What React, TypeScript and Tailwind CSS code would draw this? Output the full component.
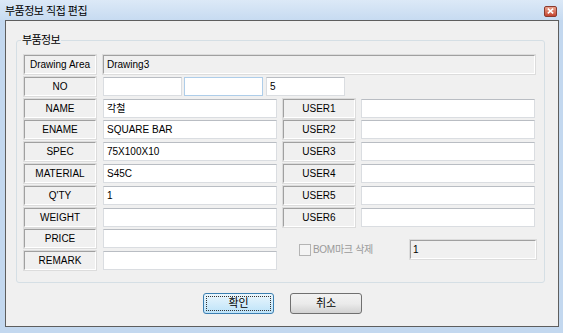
import React from "react";

const font = "font-['Liberation_Sans','Noto_Sans_CJK_KR',sans-serif]";

function Label({ children }: { children: React.ReactNode }) {
  return (
    <div className="flex h-[19px] w-[72px] shrink-0 items-center justify-center border border-t-[#a0a0a0] border-l-[#a0a0a0] border-b-white border-r-white bg-[#f0f0f0] text-[10px] text-black outline outline-1 outline-[#dcdcdc]">
      {children}
    </div>
  );
}

function Field({ value = "", className = "w-[174px]", hover = false }: { value?: string; className?: string; hover?: boolean }) {
  return (
    <div
      className={
        "flex h-[19px] shrink-0 items-center border bg-white pl-[3px] text-[10px] text-black " +
        (hover ? "border-[#aecde9] " : "border-[#dadde1] border-t-[#b9bdc3] ") +
        className
      }
    >
      {value}
    </div>
  );
}

function Row({ label, value }: { label: string; value?: string }) {
  return (
    <div className="flex h-[19px] items-center gap-[7px]">
      <Label>{label}</Label>
      <Field value={value} />
    </div>
  );
}

function UserRow({ label }: { label: string }) {
  return (
    <div className="flex h-[19px] items-center gap-[6px]">
      <Label>{label}</Label>
      <Field />
    </div>
  );
}

export default function App() {
  return (
    <div className={"h-[333px] w-[563px] bg-[#c3d8ef] " + font}>
      <div className="flex h-[20px] items-center justify-between bg-gradient-to-b from-[#dce9f7] to-[#c7dbf1] pl-[5px] pr-[6px] pt-[2px]">
        <span className="text-[11px] tracking-[-0.5px] text-black">부품정보 직접 편집</span>
        <div className="flex h-[11px] w-[13px] items-center justify-center rounded-[2px] border border-[#8a3a2e] bg-gradient-to-b from-[#e9a18c] to-[#c4432f]">
          <svg width="7" height="6" viewBox="0 0 7 6">
            <path d="M0.8 0.6 L6.2 5.4 M6.2 0.6 L0.8 5.4" stroke="white" strokeWidth="1.5" />
          </svg>
        </div>
      </div>
      <div className="ml-[5px] mr-[4px] flex h-[307px] flex-col border border-[#5e5e5e] bg-[#f0f0f0]">
        <div className="relative ml-[10px] mr-[13px] mt-[19px] h-[243px] rounded-[3px] border border-[#d5dfe5] pl-[7px] pr-[5px] pt-[14px]">
          <span className="absolute -top-[9px] left-[4px] bg-[#f0f0f0] px-[1px] text-[11px] tracking-[-0.6px] text-black">
            부품정보
          </span>
          <div className="flex flex-col gap-[2.8px]">
            <div className="flex h-[19px] items-center gap-[7px]">
              <Label>Drawing Area</Label>
              <div className="flex h-[19px] w-[432px] items-center border border-t-[#a0a0a0] border-l-[#a0a0a0] border-b-white border-r-white bg-[#f0f0f0] pl-[3px] text-[10px] text-black outline outline-1 outline-[#dcdcdc]">
                Drawing3
              </div>
            </div>
            <div className="flex h-[19px] items-center gap-[7px]">
              <Label>NO</Label>
              <div className="flex items-center gap-[2px]">
                <Field className="w-[79px]" />
                <Field className="w-[79px]" hover />
                <Field className="ml-[1px] w-[79px]" value="5" />
              </div>
            </div>
            <div className="flex gap-[6px]">
              <div className="flex flex-col gap-[2.8px]">
                <Row label="NAME" value="각철" />
                <Row label="ENAME" value="SQUARE BAR" />
                <Row label="SPEC" value="75X100X10" />
                <Row label="MATERIAL" value="S45C" />
                <Row label="Q'TY" value="1" />
                <Row label="WEIGHT" />
                <Row label="PRICE" />
                <Row label="REMARK" />
              </div>
              <div className="flex flex-col gap-[2.8px]">
                <UserRow label="USER1" />
                <UserRow label="USER2" />
                <UserRow label="USER3" />
                <UserRow label="USER4" />
                <UserRow label="USER5" />
                <UserRow label="USER6" />
                <div className="flex flex-1 items-center pl-[16px]">
                  <div className="h-[12px] w-[12px] border border-[#b4b4b4] bg-[#f4f4f4]" />
                  <span className="ml-[2px] text-[10px] tracking-[-0.3px] text-[#9a9a9a]">BOM마크 삭제</span>
                  <div className="ml-auto mr-[-1px] flex h-[19px] w-[126px] items-center border border-t-[#a0a0a0] border-l-[#a0a0a0] border-b-white border-r-white bg-[#f0f0f0] pl-[2px] text-[10px] text-black outline outline-1 outline-[#dcdcdc]">
                    1
                  </div>
                </div>
              </div>
            </div>
          </div>
        </div>
        <div className="mt-[10px] flex justify-center gap-[16px] pl-[1px]">
          <button className="h-[21px] w-[71px] rounded-[3px] border border-[#3c7fb1] bg-gradient-to-b from-[#eaf6fd] to-[#bde3f9] p-[2px] text-[11px] text-black">
            <div className="flex h-full w-full items-center justify-center border border-dotted border-[#333]">확인</div>
          </button>
          <button className="h-[21px] w-[72px] rounded-[3px] border border-[#707070] bg-gradient-to-b from-[#f2f2f2] via-[#ebebeb] to-[#d2d2d2] text-[11px] text-black">
            취소
          </button>
        </div>
      </div>
    </div>
  );
}
